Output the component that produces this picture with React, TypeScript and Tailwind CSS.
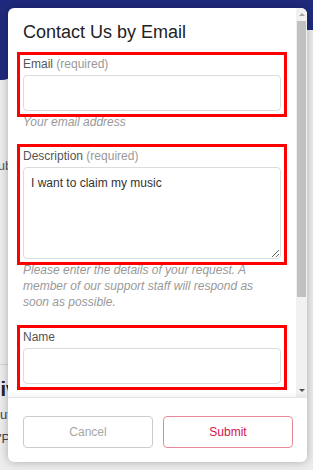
import * as React from "react";

const font = "font-['Liberation_Sans',Arial,sans-serif]";

function Field({
  label,
  required,
  children,
  className = "",
}: {
  label: string;
  required?: boolean;
  children: React.ReactNode;
  className?: string;
}) {
  return (
    <div className={`outline-[3px] outline-solid outline-[#ff0000] px-[3px] pt-[1px] pb-[3px] ${className}`}>
      <label className="block text-[12px] leading-[16px] text-[#555]">
        {label}
        {required && <span className="text-[#999]"> (required)</span>}
      </label>
      <div className="mt-[3px]">{children}</div>
    </div>
  );
}

function Scrollbar() {
  return (
    <div className="w-[11px] shrink-0 bg-[#f1f1f1] flex flex-col items-center">
      <div className="h-[13px] w-full flex items-center justify-center">
        <div className="w-0 h-0 border-l-[3px] border-r-[3px] border-b-[3px] border-l-transparent border-r-transparent border-b-[#a3a3a3]" />
      </div>
      <div className="h-[276px] w-[9px] bg-[#c1c1c1]" />
      <div className="flex-1" />
      <div className="h-[13px] w-full flex items-center justify-center">
        <div className="w-0 h-0 border-l-[3px] border-r-[3px] border-t-[3px] border-l-transparent border-r-transparent border-t-[#505050]" />
      </div>
    </div>
  );
}

export default function App() {
  return (
    <div className={`relative w-[313px] h-[470px] overflow-hidden bg-[#ececec] ${font}`}>
      {/* page behind the dialog */}
      <div className="h-[30px] bg-[#1f2a7c]" />
      <div className="w-[16px] h-[50px] bg-[#1f2a7c] rounded-br-[14px]" />
      <p className="mt-[78px] -ml-[11px] text-[13px] leading-[16px] text-[#555]">Public</p>
      <div className="mt-[190px] border-t border-[#d4d4d4] w-[40px]" />
      <p className="mt-[12px] -ml-[15px] text-[20px] leading-[24px] font-bold text-[#222]">Give</p>
      <p className="mt-[4px] -ml-[10px] text-[13px] leading-[20px] text-[#444]">Output</p>
      <p className="mt-[4px] -ml-[3px] text-[13px] leading-[20px] text-[#444]">"Play</p>

      {/* dialog */}
      <div className="absolute left-[8px] top-[8px] w-[299px] h-[454px] bg-white rounded-[6px] overflow-hidden shadow-[0_0_8px_rgba(0,0,0,0.28)] flex flex-col">
        <div className="h-[389px] flex shrink-0">
          <div className="flex-1 overflow-hidden px-[12px] pt-[12px]">
            <h2 className="px-[3px] text-[18px] leading-[24px] text-[#222]">Contact Us by Email</h2>

            <Field label="Email" required className="mt-[11px]">
              <input className="block w-full h-[36px] rounded-[4px] border border-[#dcdcdc] bg-white outline-none px-[7px] text-[12px] text-[#333]" />
            </Field>
            <p className="px-[3px] text-[12px] leading-[16px] italic text-[#999]">Your email address</p>

            <Field label="Description" required className="mt-[17px]">
              <textarea
                defaultValue="I want to claim my music"
                className="block w-full h-[92px] rounded-[4px] border border-[#dcdcdc] bg-white outline-none px-[7px] py-[7px] text-[12px] leading-[16px] text-[#333] resize-y"
              />
            </Field>
            <p className="px-[3px] text-[12px] leading-[16px] italic text-[#999]">
              Please enter the details of your request. A member of our support staff will respond as soon as possible.
            </p>

            <Field label="Name" className="mt-[18px]">
              <input className="block w-full h-[36px] rounded-[4px] border border-[#dcdcdc] bg-white outline-none px-[7px] text-[12px] text-[#333]" />
            </Field>
          </div>
          <Scrollbar />
        </div>

        <div className="flex-1 border-t border-[#e6e6e6] shadow-[0_-2px_4px_rgba(0,0,0,0.05)] flex gap-[10px] pl-[15px] pr-[14px] pt-[18px]">
          <button className="w-[130px] h-[32px] rounded-[4px] border border-[#cccccc] bg-white text-[12px] text-[#a6a6a6]">
            Cancel
          </button>
          <button className="w-[130px] h-[32px] rounded-[4px] border border-[#e8899b] bg-white text-[12px] text-[#d3144a]">
            Submit
          </button>
        </div>
      </div>
    </div>
  );
}
